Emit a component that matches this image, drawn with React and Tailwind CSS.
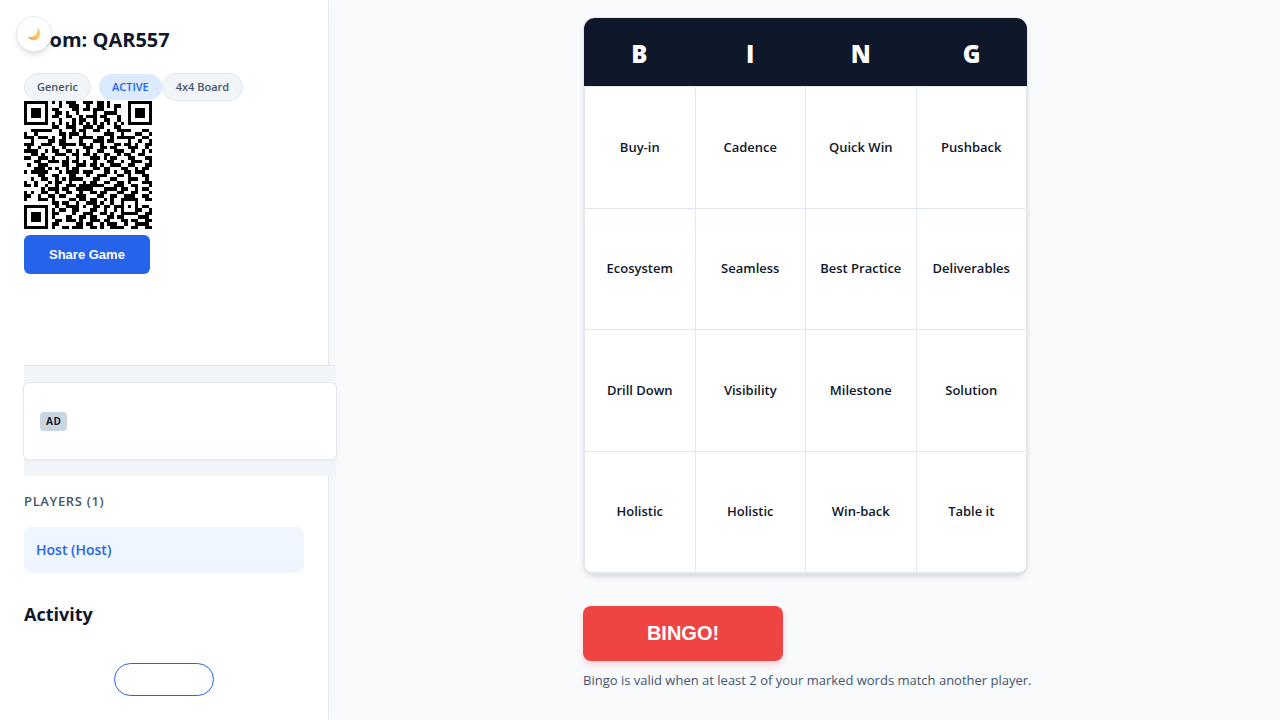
import { useState } from 'react';

const headers = ['B', 'I', 'N', 'G'];

const words = [
  'Buy-in', 'Cadence', 'Quick Win', 'Pushback',
  'Ecosystem', 'Seamless', 'Best Practice', 'Deliverables',
  'Drill Down', 'Visibility', 'Milestone', 'Solution',
  'Holistic', 'Holistic', 'Win-back', 'Table it',
];

// 37 x 37 modules, # is dark
const qrRows = [
  '#######.#.#.###..###.##.#.....#######',
  '#.....#...#..###..#..##.#.##..#.....#',
  '#.###.#.##....##.##.###...#...#.###.#',
  '#.###.#..##.#..#....#..####...#.###.#',
  '#.###.#.##..##..#.###.##...#..#.###.#',
  '#.....#...#...#.##..#..##..#..#.....#',
  '#######.#.#.#.#.#.#.#.#.#.#.#.#######',
  '........##..###..###.##...##.........',
  '..######..#...#.##..##..#..####...##.',
  '#..#......##.###.#.....###..#...##..#',
  '###.###.#..#.#..####.##..#.#####..##.',
  '..#....##.##....#...###.##....#..#..#',
  '###..###..#####.##.#..#...##.##.#..##',
  '.#..#...#..#.....###..##.##...###..#.',
  '####..#.##..##.#..#..##...###..#..#.#',
  '..##.#...###..##.##.#..##..#.##..##..',
  '##..###.#...#..#...###.#.##...##...##',
  '...##..###.##.##.#..#...##..#..###..#',
  '.#..###....##..###.##.#..###..##...##',
  '...###.#.#..#.##....##.##...##..#.##.',
  '#.#####...#.####.###...##.#..##.###..',
  '....##..##...##...#..###...##.#...##.',
  '..#..##..#.#.####...##...##...###..#.',
  '#..#...#.##..#...#.##..##..##.#...###',
  '##.#..#..#..###.#######...###..##...#',
  '.....#.###.##..#####...####.##..#.##.',
  '#.#..##..#..##..#..##.##...##..##...#',
  '##..#..##.##...###...##..##..###..##.',
  '#...###.#....##.##.##..#.#..#####..##',
  '........##.##..#..###.#..#..#...#....',
  '#######..#..####.#..##.##.###.#.#.##.',
  '#.....#.#.##..##...##..#..#.#...##..#',
  '#.###.#.##....#..###..##.#..#####..##',
  '#.###.#.#...##..##.##...##.##....###.',
  '#.###.#..##.###.#..###.##...##.##..##',
  '#.....#.##.....##.##..#.###..#..####.',
  '#######.#..##.###..##.#..####..##..##',
];

function QrCode() {
  const d = qrRows
    .flatMap((row, y) => [...row].map((c, x) => (c === '#' ? `M${x} ${y}h1v1h-1z` : '')))
    .join('');

  return (
    <svg viewBox="0 0 37 37" className="block size-32 bg-white" shapeRendering="crispEdges" role="img" aria-label="Room QR code">
      <path d={d} fill="#000" />
    </svg>
  );
}

function MoonIcon() {
  return (
    <svg viewBox="0 0 14 14" className="size-3.5" aria-hidden="true">
      <defs>
        <linearGradient id="moon" x1="1" y1="0" x2="0" y2="1">
          <stop offset="0" stopColor="#ffd77a" />
          <stop offset="0.6" stopColor="#fcc05e" />
          <stop offset="1" stopColor="#ee9b50" />
        </linearGradient>
      </defs>
      <path d="M10.2 0.8C12.4 2 13.5 4 13.3 6.7C13.1 10.4 10.2 13.2 6.5 13.2C3.8 13.2 1.6 11.9 0.6 9.6C2.8 10.3 5.5 10.1 7.6 8.5C9.9 6.7 10.9 3.8 10.2 0.8Z" fill="url(#moon)" />
      <circle cx="11.2" cy="6.6" r="0.7" fill="#eda552" />
      <circle cx="8.2" cy="10.7" r="0.8" fill="#eda552" />
      <circle cx="4.6" cy="11.2" r="0.5" fill="#dd8a48" />
    </svg>
  );
}

function Sidebar() {
  return (
    <aside className="w-[329px] shrink-0 border-r border-slate-200 bg-white p-6 shadow-[4px_0_24px_rgba(0,0,0,0.02)]">
      <h1 className="text-xl leading-8 font-bold">Room: QAR557</h1>

      <div className="mt-[17px] flex items-center text-[11px] leading-[18px] font-semibold">
        <span className="mr-2 rounded-full border border-slate-200 bg-slate-100 px-3 py-1 text-slate-600">Generic</span>
        <span className="rounded-full bg-[#dbeafe] px-[13px] py-1 text-[#2563eb]">ACTIVE</span>
        <span className="rounded-full border border-slate-200 bg-slate-100 px-[13px] py-1 text-slate-600">4x4 Board</span>
      </div>

      <QrCode />

      <button
        type="button"
        className="mt-1.5 h-[39px] rounded-md bg-[#2563eb] px-[25px] font-['Liberation_Sans',Arial,sans-serif] text-[13px] font-bold text-white"
      >
        Share Game
      </button>

      <div className="relative mt-[91px] -mr-8 border-t border-slate-200 bg-slate-100 py-4">
        <div className="-mx-px flex h-[78px] items-center rounded-md border border-slate-200 bg-white px-4 shadow-xs">
          <span className="rounded-sm bg-slate-300 px-1.5 text-[10px] leading-[19px] font-bold tracking-wider">AD</span>
        </div>
      </div>

      <h2 className="mt-4 text-[13px] leading-[18px] font-semibold tracking-wider text-slate-600">PLAYERS (1)</h2>
      <ul className="mt-[17px]">
        <li className="rounded-lg bg-[#eff6ff] px-3 py-3 text-sm leading-[22px] font-semibold text-[#2563eb]">Host (Host)</li>
      </ul>

      <h2 className="mt-[27px] text-lg leading-7 font-bold">Activity</h2>
      <div className="mt-[35px] flex justify-center">
        <button type="button" aria-label="Show more" className="h-[33px] w-25 rounded-full border border-[#2563eb]" />
      </div>
    </aside>
  );
}

function Board() {
  const [marked, setMarked] = useState([]);

  const toggle = (i) => {
    setMarked((prev) => (prev.includes(i) ? prev.filter((m) => m !== i) : [...prev, i]));
  };

  return (
    <div className="overflow-hidden rounded-xl border border-slate-200 bg-slate-200 shadow-md">
      <div className="grid grid-cols-4 bg-slate-900 text-2xl leading-9 font-extrabold text-white">
        {headers.map((h) => (
          <div key={h} className="pt-[18px] pb-3.5 text-center">{h}</div>
        ))}
      </div>
      <div className="grid min-h-[487px] grid-cols-4 grid-rows-4 gap-px p-px">
        {words.map((word, i) => (
          <button
            key={i}
            type="button"
            onClick={() => toggle(i)}
            className={`px-2 text-[13px] font-semibold ${marked.includes(i) ? 'bg-blue-600 text-white' : 'bg-white'}`}
          >
            {word}
          </button>
        ))}
      </div>
    </div>
  );
}

export default function App() {
  return (
    <div className="flex min-h-screen bg-slate-50 font-['Open_Sans','Noto_Sans',sans-serif] text-slate-900">
      <button
        type="button"
        aria-label="Toggle theme"
        className="fixed top-4 left-4 z-10 flex size-9 items-center justify-center rounded-full border border-slate-200 bg-white shadow-md"
      >
        <MoonIcon />
      </button>

      <Sidebar />

      <main className="flex flex-1 justify-center pt-[17px] pl-0.5">
        <div className="w-full max-w-[445px]">
          <Board />
          <button
            type="button"
            className="mt-8 block h-[55px] w-50 rounded-lg bg-[#ef4444] pb-0.5 font-['Liberation_Sans',Arial,sans-serif] text-xl font-bold text-white shadow-[0_4px_6px_rgba(239,68,68,0.2)]"
          >
            BINGO!
          </button>
          <p className="mt-[7px] text-[13px] leading-6 whitespace-nowrap text-slate-600">
            Bingo is valid when at least 2 of your marked words match another player.
          </p>
        </div>
      </main>
    </div>
  );
}
